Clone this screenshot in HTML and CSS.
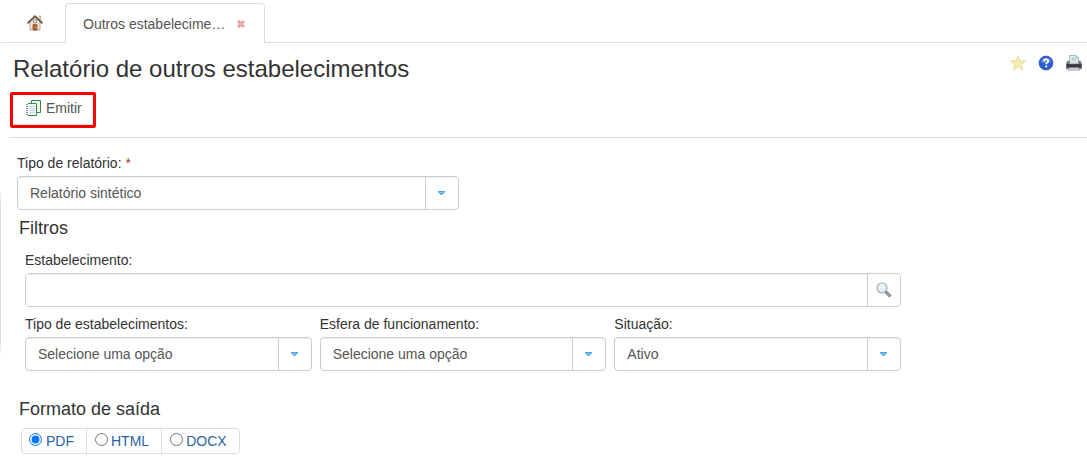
FILE: index.html
```html
<!DOCTYPE html>
<html lang="pt-BR">
<head>
<meta charset="utf-8">
<meta name="viewport" content="width=device-width, initial-scale=1">
<title>Relatório de outros estabelecimentos</title>
<link rel="stylesheet" href="styles.css">
</head>
<body>
<div class="side-handle"></div>
<nav class="tabs">
  <button class="tab tab-home" type="button" aria-label="Início">
    <svg width="16" height="16" viewBox="0 0 16 16">
      <path d="M12 1h2v5h-2z" fill="#eadfce" stroke="#a89883" stroke-width=".6"/>
      <path d="M3 7l5-5 5 5v8H3z" fill="#f3e6d4" stroke="#a99379" stroke-width=".8"/>
      <path d="M.6 8.3L8 1.2l7.4 7.1" fill="none" stroke="#665052" stroke-width="1.7"/>
      <path d="M6.5 4.8h3v3h-3z" fill="#eef5fb" stroke="#a66b42" stroke-width=".8"/>
      <path d="M6 9.5h4V15H6z" fill="#b86530" stroke="#87502b" stroke-width=".8"/>
      <path d="M8.6 12h1v1h-1z" fill="#f8d59c"/>
    </svg>
  </button>
  <div class="tab tab-active">
    <span>Outros estabelecime…</span>
    <button class="tab-close" type="button" aria-label="Fechar">
      <svg width="8" height="8" viewBox="0 0 8 8"><path d="M1 1l6 6M7 1L1 7" stroke="#e09a9a" stroke-width="2.8"/><path d="M1.5 1.5l5 5M6.5 1.5l-5 5" stroke="#edbcbc" stroke-width=".8"/></svg>
    </button>
  </div>
</nav>
<header class="page-head">
  <div class="title-row">
    <h1>Relatório de outros estabelecimentos</h1>
    <div class="actions">
      <button type="button" aria-label="Favorito">
        <svg width="16" height="16" viewBox="0 0 16 16"><path d="M8 .5l2 5.300 5.600.2-4.400 3.500 1.600 5.500L8 11.900 3.200 15l1.600-5.500L.4 6l5.600-.2z" fill="#f4eca8" stroke="#e2d8a6" stroke-width=".9"/></svg>
      </button>
      <button type="button" aria-label="Ajuda">
        <svg width="16" height="16" viewBox="0 0 16 16"><circle cx="8" cy="8" r="6.9" fill="#2e5ed0" stroke="#2746a8" stroke-width=".8"/><path d="M2.5 7a5.6 5.6 0 0 1 11 0q-5 2-11 0z" fill="#6d92e6" opacity=".6"/><path d="M5.9 6.4C5.9 3.6 10.3 3.7 10.3 6c0 1.6-2.1 1.5-2.1 3.2" fill="none" stroke="#fff" stroke-width="1.8"/><path d="M7.2 10.5h2v1.8h-2z" fill="#fff"/></svg>
      </button>
      <button type="button" aria-label="Imprimir">
        <svg width="16" height="16" viewBox="0 0 16 16"><path d="M3.500.5h6.500l2.500 2.500v5h-9z" fill="#e3f2ee" stroke="#8fb0a8" stroke-width=".8"/><path d="M10 .5V3h2.500M5.500 3h3M5.500 5h5" fill="none" stroke="#7fada2" stroke-width=".8"/><path d="M1.500 6h2v3h9V6h2L15.800 9v5H.2V9z" fill="#77787e" stroke="#8d8e94" stroke-width=".6"/><path d="M.5 9.200h15v3.200H.5z" fill="#393a41"/><path d="M3.300 12.800h9.400l.6 2.500H2.700z" fill="#d8dade" stroke="#8a8b91" stroke-width=".6"/></svg>
      </button>
    </div>
  </div>
  <button class="emit" type="button">
    <svg width="16" height="16" viewBox="0 0 16 16"><path d="M5.500.5h9v12h-9z" fill="#f0faef" stroke="#2e8b3a"/><path d="M1.500 3.500h9v12h-9z" fill="#f4f8fc" stroke="#348c40"/><path d="M3.500 6.500h5.500M3.500 8.500h5.500M3.500 10.500h5.500M3.500 12.500h5.500" stroke="#c7d6e3"/><path d="M1.500 3v13" stroke="#fff"/><path d="M0 4.500h2M0 6.500h2M0 8.500h2M0 10.500h2M0 12.500h2M0 14.500h2" stroke="#888"/></svg>
    <span>Emitir</span>
  </button>
</header>
<main>
  <form class="form">
    <div class="field field-type">
      <label for="tipo">Tipo de relatório: <span class="required">*</span></label>
      <div class="select"><select id="tipo"><option>Relatório sintético</option></select><span class="trigger"><svg width="7" height="4" viewBox="0 0 7 4"><path d="M0 0h7v1L4 4H3L0 1z" fill="#4aa6e0"/><path d="M2 1h3L3.500 2.500z" fill="#a8dcf8"/></svg></span></div>
    </div>
    <h2>Filtros</h2>
    <div class="filters">
      <div class="field field-wide">
        <label for="est">Estabelecimento:</label>
        <div class="search">
          <input id="est" type="text">
          <button type="button" aria-label="Pesquisar">
            <svg width="16" height="16" viewBox="0 0 16 16"><path d="M9.500 9.500l5 5" stroke="#777" stroke-width="3"/><path d="M10.500 10.500l3.700 3.700" stroke="#c9c9c9" stroke-width="1"/><circle cx="6" cy="6" r="5" fill="#e0eefb" stroke="#a9abb0" stroke-width="1.200"/><path d="M3 5.500h6M3.500 4q2-2 4.500-1" stroke="#fff" fill="none"/></svg>
          </button>
        </div>
      </div>
      <div class="field">
        <label for="tipos">Tipo de estabelecimentos:</label>
        <div class="select"><select id="tipos"><option>Selecione uma opção</option></select><span class="trigger"><svg width="7" height="4" viewBox="0 0 7 4"><path d="M0 0h7v1L4 4H3L0 1z" fill="#4aa6e0"/><path d="M2 1h3L3.500 2.500z" fill="#a8dcf8"/></svg></span></div>
      </div>
      <div class="field">
        <label for="esfera">Esfera de funcionamento:</label>
        <div class="select"><select id="esfera"><option>Selecione uma opção</option></select><span class="trigger"><svg width="7" height="4" viewBox="0 0 7 4"><path d="M0 0h7v1L4 4H3L0 1z" fill="#4aa6e0"/><path d="M2 1h3L3.500 2.500z" fill="#a8dcf8"/></svg></span></div>
      </div>
      <div class="field">
        <label for="situacao">Situação:</label>
        <div class="select"><select id="situacao"><option>Ativo</option></select><span class="trigger"><svg width="7" height="4" viewBox="0 0 7 4"><path d="M0 0h7v1L4 4H3L0 1z" fill="#4aa6e0"/><path d="M2 1h3L3.500 2.500z" fill="#a8dcf8"/></svg></span></div>
      </div>
    </div>
    <h2 class="format-title">Formato de saída</h2>
    <div class="formats">
      <label class="format"><input type="radio" name="formato" checked><span>PDF</span></label>
      <label class="format"><input type="radio" name="formato"><span>HTML</span></label>
      <label class="format"><input type="radio" name="formato"><span>DOCX</span></label>
    </div>
  </form>
</main>
</body>
</html>
```
FILE: styles.css
```css
* { box-sizing: border-box; }
body {
  margin: 0;
  background: #fff;
  color: #333;
  font: 14px/20px "Liberation Sans", Arial, sans-serif;
}
button, input, select { font: inherit; color: #555; }
button { background: none; border: 0; padding: 0; cursor: pointer; }
svg { display: block; flex: none; }
h1, h2 { margin: 0; font-weight: normal; }
h1 { font-size: 24px; line-height: 28px; }
h2 { font-size: 18px; line-height: 20px; padding-left: 2px; }

.side-handle {
  position: absolute;
  left: 0;
  top: 190px;
  width: 1px;
  height: 165px;
  background: linear-gradient(#fff, #ddd 8%, #ddd 92%, #fff);
}

.tabs {
  display: flex;
  height: 43px;
  margin-left: 1px;
  padding-top: 3px;
  box-shadow: inset 0 -1px #ddd;
}
.tab { display: flex; align-items: center; }
.tab-home { width: 64px; justify-content: center; padding: 0 0 1px 4px; }
.tab-active {
  width: 200px;
  gap: 12px;
  padding-left: 17px;
  border: 1px solid #ddd;
  border-bottom: 0;
  border-radius: 4px 4px 0 0;
  background: #fff;
  color: #555;
}

.page-head {
  margin-left: 9px;
  padding: 12px 0 9px;
  border-bottom: 1px solid #ddd;
}
.title-row { display: flex; justify-content: space-between; padding: 0 5px 0 4px; }
.actions { display: flex; align-items: flex-start; gap: 12px; }
.emit {
  display: flex;
  align-items: center;
  gap: 4px;
  height: 36px;
  margin: 9px 0 0 1px;
  padding: 0 11px 4px 13px;
  border: 3px solid #f00;
  border-radius: 2px;
  box-shadow: inset 0 -1px #ddd;
}

.form { padding: 15px 16px 0 17px; }
.field { display: flex; flex-direction: column; gap: 3px; min-width: 0; }
.field-type { max-width: 442px; margin-bottom: 8px; }
.required { color: #a33b3b; }
.select { display: grid; }
.select select, .select .trigger { grid-area: 1 / 1; }
.select select {
  appearance: none;
  width: 100%;
  height: 34px;
  padding: 0 44px 0 12px;
  border: 1px solid #ccc;
  border-radius: 4px;
  background: #fff;
  box-shadow: inset 0 1px 1px #eee;
}
.trigger {
  display: flex;
  align-items: center;
  justify-content: center;
  justify-self: end;
  width: 34px;
  padding-right: 2px;
  border-left: 1px solid #ccc;
  pointer-events: none;
}
.filters {
  display: grid;
  grid-template-columns: repeat(3, 1fr);
  gap: 7px 8px;
  max-width: 884px;
  padding: 12px 0 0 8px;
}
.field-wide { grid-column: 1 / -1; }
.search {
  display: flex;
  height: 34px;
  border: 1px solid #ccc;
  border-radius: 4px;
  overflow: hidden;
}
.search input {
  flex: 1;
  min-width: 0;
  padding: 0 12px;
  border: 0;
  box-shadow: inset 0 1px 1px #eee;
}
.search button {
  display: flex;
  align-items: center;
  justify-content: center;
  width: 33px;
  border-left: 1px solid #ccc;
}
.format-title { margin-top: 28px; }
.formats {
  display: inline-flex;
  height: 26px;
  margin: 9px 0 0 4px;
  border: 1px solid #ddd;
  border-radius: 4px;
}
.format { display: flex; gap: 3px; padding: 2px 12px 0 8px; color: #2a62a6; }
.format:first-child { gap: 4px; padding-left: 7px; }
.format + .format { border-left: 1px solid #ddd; }
.format input { width: 13px; height: 13px; margin: 2px 0 0; }
```
